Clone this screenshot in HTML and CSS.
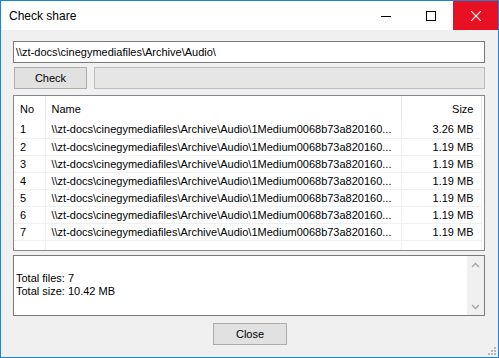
FILE: index.html
```html
<!DOCTYPE html>
<html lang="en">
<head>
    <meta charset="UTF-8">
    <title>Check share</title>
    <link rel="stylesheet" href="styles.css">
</head>
<body>
    <div class="window">
        <div class="titlebar">
            <span class="title">Check share</span>
            <div class="caption">
                <span class="cap-btn">
                    <svg width="10" height="10" viewBox="0 0 10 10"><path d="M0 5.5H10" stroke="#000" stroke-width="1"/></svg>
                </span>
                <span class="cap-btn">
                    <svg width="10" height="10" viewBox="0 0 10 10"><rect x="0.5" y="0.5" width="9" height="9" fill="none" stroke="#000" stroke-width="1"/></svg>
                </span>
                <span class="cap-btn close">
                    <svg width="10" height="10" viewBox="0 0 10 10"><path d="M0 0L10 10M10 0L0 10" stroke="#fff" stroke-width="1.1"/></svg>
                </span>
            </div>
        </div>
        <div class="client">
            <div class="path">\\zt-docs\cinegymediafiles\Archive\Audio\</div>
            <div class="check-row">
                <div class="btn check">Check</div>
                <div class="progress"></div>
            </div>
            <div class="listview">
                <table class="files">
                    <colgroup>
                        <col class="c-no">
                        <col class="c-name">
                        <col class="c-size">
                    </colgroup>
                    <thead>
                        <tr><th>No</th><th>Name</th><th class="num">Size</th></tr>
                    </thead>
                    <tbody>
                        <tr><td>1</td><td>\\zt-docs\cinegymediafiles\Archive\Audio\1Medium0068b73a820160...</td><td class="num">3.26 MB</td></tr>
                        <tr><td>2</td><td>\\zt-docs\cinegymediafiles\Archive\Audio\1Medium0068b73a820160...</td><td class="num">1.19 MB</td></tr>
                        <tr><td>3</td><td>\\zt-docs\cinegymediafiles\Archive\Audio\1Medium0068b73a820160...</td><td class="num">1.19 MB</td></tr>
                        <tr><td>4</td><td>\\zt-docs\cinegymediafiles\Archive\Audio\1Medium0068b73a820160...</td><td class="num">1.19 MB</td></tr>
                        <tr><td>5</td><td>\\zt-docs\cinegymediafiles\Archive\Audio\1Medium0068b73a820160...</td><td class="num">1.19 MB</td></tr>
                        <tr><td>6</td><td>\\zt-docs\cinegymediafiles\Archive\Audio\1Medium0068b73a820160...</td><td class="num">1.19 MB</td></tr>
                        <tr><td>7</td><td>\\zt-docs\cinegymediafiles\Archive\Audio\1Medium0068b73a820160...</td><td class="num">1.19 MB</td></tr>
                        <tr class="filler"><td></td><td></td><td></td></tr>
                    </tbody>
                </table>
            </div>
            <div class="log">
                <div class="log-text">
                    Total files: 7<br>
                    Total size: 10.42 MB
                </div>
                <div class="scrollbar">
                    <span class="arrow">
                        <svg width="9" height="6" viewBox="0 0 9 6"><path d="M1 5L4.5 1.5L8 5" fill="none" stroke="#a3a3a3" stroke-width="1.3"/></svg>
                    </span>
                    <span class="arrow">
                        <svg width="9" height="6" viewBox="0 0 9 6"><path d="M1 1L4.5 4.5L8 1" fill="none" stroke="#a3a3a3" stroke-width="1.3"/></svg>
                    </span>
                </div>
            </div>
            <div class="footer">
                <div class="btn close-btn">Close</div>
            </div>
        </div>
        <div class="grip">
            <span></span><span></span><span></span><span></span><span></span><span></span>
        </div>
    </div>
</body>
</html>
```

FILE: styles.css
```css
* {
    box-sizing: border-box;
}
body {
    margin: 0;
    background: #fff;
    font-family: 'Liberation Sans', Arial, sans-serif;
    font-size: 11px;
    color: #000;
}
.window {
    width: 499px;
    height: 358px;
    border: 1px solid #1a84d6;
    background: #f0f0f0;
    display: flex;
    flex-direction: column;
    position: relative;
}
.titlebar {
    height: 29px;
    background: #fff;
    display: flex;
    align-items: center;
}
.title {
    flex: 1;
    padding-left: 8px;
    font-size: 12px;
}
.caption {
    display: flex;
    height: 100%;
}
.cap-btn {
    width: 45px;
    display: flex;
    align-items: center;
    justify-content: center;
}
.cap-btn.close {
    background: #e81123;
}
.client {
    flex: 1;
    padding: 11px 13px 0 12px;
    display: flex;
    flex-direction: column;
}
.path {
    height: 22px;
    border: 1px solid #7a7a7a;
    background: #fff;
    padding: 0 2px;
    line-height: 20px;
    white-space: nowrap;
}
.check-row {
    display: flex;
    margin-top: 4px;
    height: 22px;
}
.btn {
    background: #e1e1e1;
    border: 1px solid #adadad;
    display: flex;
    align-items: center;
    justify-content: center;
    height: 22px;
}
.check {
    width: 73px;
    margin-left: 1px;
}
.progress {
    flex: 1;
    margin-left: 7px;
    background: #e6e6e6;
    border: 1px solid #bcbcbc;
}
.listview {
    margin-top: 6px;
    height: 156px;
    border: 1px solid #828790;
    background: #fff;
    overflow: hidden;
}
.files {
    border-collapse: collapse;
    table-layout: fixed;
    width: 467px;
    height: 154px;
}
.c-no {
    width: 31px;
}
.c-name {
    width: 356px;
}
.c-size {
    width: 80px;
}
.files th {
    height: 25px;
    font-weight: normal;
    text-align: left;
    padding: 0 6px;
    border-right: 1px solid #e5e5e5;
}
.files td {
    height: 17px;
    padding: 0 6px;
    white-space: nowrap;
    overflow: hidden;
    border-right: 1px solid #f0f0f0;
    border-bottom: 1px solid #f0f0f0;
}
.files .num {
    text-align: right;
    padding-right: 7px;
}
.files .filler td {
    height: auto;
    border-bottom: none;
}
.log {
    margin-top: 4px;
    height: 61px;
    border: 1px solid #7a7a7a;
    background: #fff;
    display: flex;
}
.log-text {
    flex: 1;
    padding: 16px 2px 0;
    line-height: 13px;
}
.scrollbar {
    width: 17px;
    background: #f0f0f0;
    display: flex;
    flex-direction: column;
    justify-content: space-between;
}
.arrow {
    height: 17px;
    display: flex;
    align-items: center;
    justify-content: center;
}
.footer {
    margin-top: 7px;
    display: flex;
    justify-content: center;
}
.close-btn {
    width: 74px;
    margin-left: 2px;
}
.grip {
    position: absolute;
    right: 2px;
    bottom: 2px;
    width: 8px;
    height: 8px;
    display: grid;
    grid-template-columns: repeat(3, 2px);
    grid-template-rows: repeat(3, 2px);
    gap: 1px;
}
.grip span {
    background: #b8b8b8;
}
.grip span:nth-child(1) {
    grid-column: 3;
    grid-row: 1;
}
.grip span:nth-child(2) {
    grid-column: 2;
    grid-row: 2;
}
.grip span:nth-child(3) {
    grid-column: 3;
    grid-row: 2;
}
.grip span:nth-child(4) {
    grid-column: 1;
    grid-row: 3;
}
.grip span:nth-child(5) {
    grid-column: 2;
    grid-row: 3;
}
.grip span:nth-child(6) {
    grid-column: 3;
    grid-row: 3;
}
```
